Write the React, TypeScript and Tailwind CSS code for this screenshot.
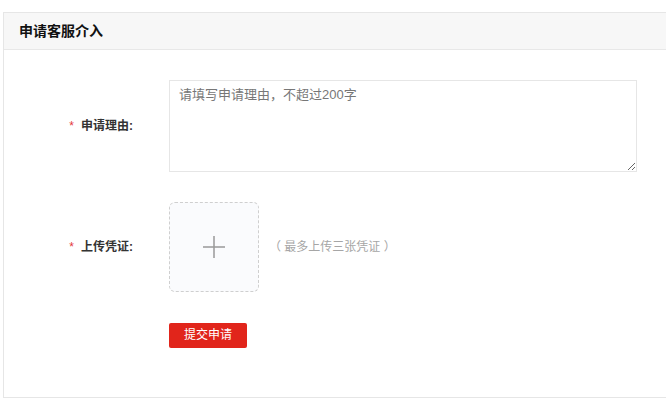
import React from "react";

const font = {
  fontFamily: '"Liberation Sans", Arial, "Noto Sans CJK SC", sans-serif',
};

function Label({ text }: { text: string }) {
  return (
    <div className="w-[129px] shrink-0 text-right text-[12px] font-bold text-[#333]">
      <span className="mr-[7px] font-normal text-[#e4393c]">*</span>
      {text}
    </div>
  );
}

export default function App() {
  return (
    <div className="h-[401px] w-[666px] overflow-hidden bg-white" style={font}>
      <div className="ml-[3px] mt-[12px] h-[386px] w-[680px] border border-[#e6e6e6]">
        {/* Header */}
        <div className="flex h-[37px] items-center border-b border-[#e8e8e8] bg-[#f7f7f7] pl-[15px]">
          <h3 className="text-[14px] font-bold text-[#111]">申请客服介入</h3>
        </div>

        {/* Form */}
        <div className="pt-[30px]">
          <div className="flex items-center">
            <Label text="申请理由:" />
            <textarea
              className="ml-[36px] h-[92px] w-[468px] resize border border-[#e6e6e6] px-[9px] py-[4px] text-[13px] text-[#333] outline-none placeholder:text-[#777]"
              placeholder="请填写申请理由，不超过200字"
            />
          </div>

          <div className="mt-[30px] flex items-center">
            <Label text="上传凭证:" />
            <button
              type="button"
              className="ml-[36px] flex h-[90px] w-[90px] items-center justify-center rounded-[6px] border border-dashed border-[#cfcfcf] bg-[#fafbfd]"
            >
              <svg width="24" height="24" viewBox="0 0 24 24">
                <path d="M12 1v22M1 12h22" stroke="#999" strokeWidth="1.5" />
              </svg>
            </button>
            <span className="ml-[10px] text-[12px] text-[#a6a6a6]">（ 最多上传三张凭证 ）</span>
          </div>

          <div className="mt-[30px] pl-[165px]">
            <button
              type="button"
              className="h-[25px] w-[78px] rounded-[2px] bg-[#e1251b] text-[12px] text-white"
            >
              提交申请
            </button>
          </div>
        </div>
      </div>
    </div>
  );
}
